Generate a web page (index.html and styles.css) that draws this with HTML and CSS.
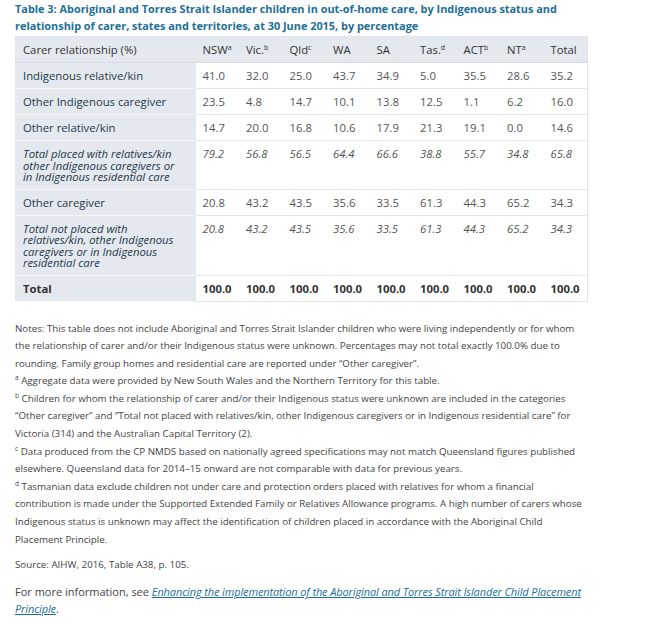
FILE: index.html
```html
<!DOCTYPE html>
<html lang="en">
<head>
<meta charset="utf-8">
<title>Table 3</title>
<link rel="stylesheet" href="styles.css">
</head>
<body>
<div class="page">
  <h3 class="caption">Table 3: Aboriginal and Torres Strait Islander children in out-of-home care, by Indigenous status and relationship of carer, states and territories, at 30 June 2015, by percentage</h3>
  <table class="data">
    <colgroup>
      <col class="c-label">
      <col span="9" class="c-num">
    </colgroup>
    <thead>
      <tr>
        <th>Carer relationship (%)</th>
        <th>NSW<sup>a</sup></th>
        <th>Vic.<sup>b</sup></th>
        <th>Qld<sup>c</sup></th>
        <th>WA</th>
        <th>SA</th>
        <th>Tas.<sup>d</sup></th>
        <th>ACT<sup>b</sup></th>
        <th>NT<sup>a</sup></th>
        <th>Total</th>
      </tr>
    </thead>
    <tbody>
      <tr>
        <th>Indigenous relative/kin</th>
        <td>41.0</td><td>32.0</td><td>25.0</td><td>43.7</td><td>34.9</td><td>5.0</td><td>35.5</td><td>28.6</td><td>35.2</td>
      </tr>
      <tr>
        <th>Other Indigenous caregiver</th>
        <td>23.5</td><td>4.8</td><td>14.7</td><td>10.1</td><td>13.8</td><td>12.5</td><td>1.1</td><td>6.2</td><td>16.0</td>
      </tr>
      <tr>
        <th>Other relative/kin</th>
        <td>14.7</td><td>20.0</td><td>16.8</td><td>10.6</td><td>17.9</td><td>21.3</td><td>19.1</td><td>0.0</td><td>14.6</td>
      </tr>
      <tr class="sub">
        <th>Total placed with relatives/kin<br>other Indigenous caregivers or<br>in Indigenous residential care</th>
        <td>79.2</td><td>56.8</td><td>56.5</td><td>64.4</td><td>66.6</td><td>38.8</td><td>55.7</td><td>34.8</td><td>65.8</td>
      </tr>
      <tr>
        <th>Other caregiver</th>
        <td>20.8</td><td>43.2</td><td>43.5</td><td>35.6</td><td>33.5</td><td>61.3</td><td>44.3</td><td>65.2</td><td>34.3</td>
      </tr>
      <tr class="sub">
        <th>Total not placed with<br>relatives/kin, other Indigenous<br>caregivers or in Indigenous<br>residential care</th>
        <td>20.8</td><td>43.2</td><td>43.5</td><td>35.6</td><td>33.5</td><td>61.3</td><td>44.3</td><td>65.2</td><td>34.3</td>
      </tr>
      <tr class="total">
        <th>Total</th>
        <td>100.0</td><td>100.0</td><td>100.0</td><td>100.0</td><td>100.0</td><td>100.0</td><td>100.0</td><td>100.0</td><td>100.0</td>
      </tr>
    </tbody>
  </table>

  <div class="notes">
    <p>Notes: This table does not include Aboriginal and Torres Strait Islander children who were living independently or for whom the relationship of carer and/or their Indigenous status were unknown. Percentages may not total exactly 100.0% due to rounding. Family group homes and residential care are reported under “Other caregiver”.<br>
    <sup>a</sup> Aggregate data were provided by New South Wales and the Northern Territory for this table.<br>
    <sup>b</sup> Children for whom the relationship of carer and/or their Indigenous status were unknown are included in the categories “Other caregiver” and “Total not placed with relatives/kin, other Indigenous caregivers or in Indigenous residential care” for Victoria (314) and the Australian Capital Territory (2).<br>
    <sup>c</sup> Data produced from the CP NMDS based on nationally agreed specifications may not match Queensland figures published elsewhere. Queensland data for 2014–15 onward are not comparable with data for previous years.<br>
    <sup>d</sup> Tasmanian data exclude children not under care and protection orders placed with relatives for whom a financial contribution is made under the Supported Extended Family or Relatives Allowance programs. A high number of carers whose Indigenous status is unknown may affect the identification of children placed in accordance with the Aboriginal Child Placement Principle.</p>
    <p>Source: AIHW, 2016, Table A38, p. 105.</p>
  </div>
  <p class="more">For more information, see <a href="#">Enhancing the implementation of the Aboriginal and Torres Strait Islander Child Placement Principle</a>.</p>
</div>
</body>
</html>
```

FILE: styles.css
```css
html, body {
  margin: 0;
  padding: 0;
  background: #ffffff;
}

body {
  font-family: "Open Sans", "DejaVu Sans", sans-serif;
  color: #444;
}

.page {
  width: 572px;
  padding: 1px 15px 0;
}

.caption {
  margin: 0 0 2px;
  font-size: 10.9px;
  line-height: 16.5px;
  font-weight: 700;
  color: #1c6f98;
}

.data {
  width: 572px;
  table-layout: fixed;
  border-collapse: collapse;
  border: 1px solid #e3e3e3;
  font-size: 11.3px;
  line-height: 12px;
}

.c-label { width: 180px; }
.c-num { width: 43.5px; }

.data th,
.data td {
  padding: 7px 7px 6px;
  text-align: left;
  vertical-align: top;
  border-bottom: 1px solid #e4e4e4;
}

.data thead th {
  background: #e4e9ef;
  font-weight: 400;
  color: #333;
  border-bottom: 1px solid #d5dce3;
}

.data tbody th {
  background: #e4e9ef;
  font-weight: 400;
  color: #24384a;
  border-bottom: 1px solid #f4f6f8;
}

.data td {
  color: #555;
}

.data sup {
  font-size: 7px;
  line-height: 0;
  vertical-align: 4px;
}

.data .sub th,
.data .sub td {
  font-style: italic;
  line-height: 11.5px;
}

.data .sub th {
  padding-right: 2px;
  white-space: nowrap;
}

.data .total th,
.data .total td {
  font-weight: 700;
  color: #333;
}

.notes {
  margin-top: 18px;
  font-size: 9.75px;
  line-height: 17.6px;
  color: #444;
}

.notes p {
  margin: 0 0 7.5px;
}

.notes sup {
  font-size: 6.5px;
  line-height: 0;
  vertical-align: 4px;
}

.more {
  margin: 10px 0 0;
  font-size: 11px;
  line-height: 17px;
  color: #444;
}

.more a {
  color: #1c6f98;
  font-style: italic;
  text-decoration: underline;
  letter-spacing: -0.12px;
}
```
